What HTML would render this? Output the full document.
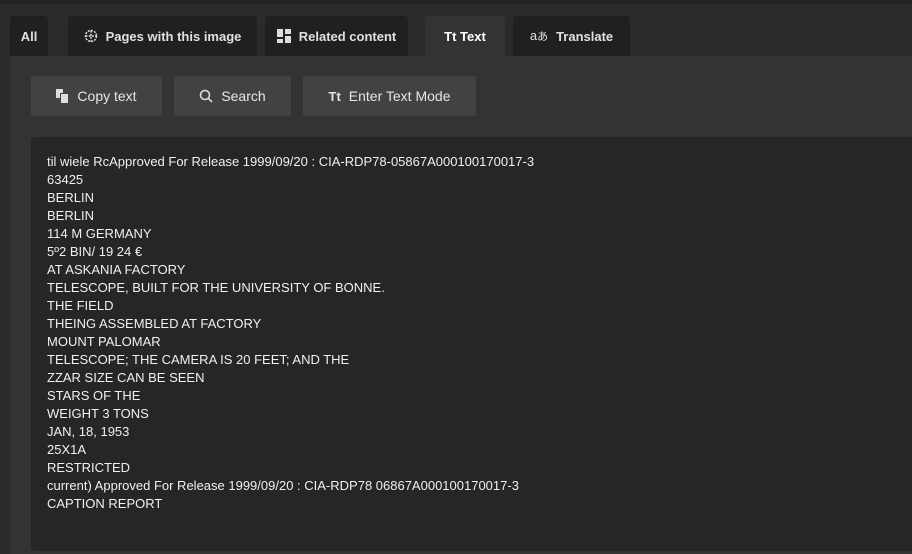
<!DOCTYPE html>
<html><head><meta charset="utf-8"><style>
*{margin:0;padding:0;box-sizing:border-box}
body{width:912px;height:554px;overflow:hidden;background:#2b2b2b;font-family:"Liberation Sans",Arial,sans-serif;position:relative;color:#e8e8e8}
.top{position:absolute;left:0;top:0;width:912px;height:4px;background:#232323}
.tab{position:absolute;top:16px;height:40px;background:#202020;border-radius:4px 4px 0 0;font-size:13px;font-weight:bold;color:#e0e0e0;display:flex;align-items:center;justify-content:center;gap:8px}
.tab.act{background:#333;color:#fff}
.panel{position:absolute;left:10px;top:56px;width:902px;height:498px;background:#333}
.btn{position:absolute;top:76px;height:40px;background:#424242;border-radius:2px;font-size:14px;color:#e6e6e6;display:flex;align-items:center;justify-content:center;gap:8px}
.ta{position:absolute;left:31px;top:137px;width:881px;height:414px;background:#262626;border-radius:4px 0 0 4px}
.txt{position:absolute;left:47px;top:153px;font-size:13px;line-height:18px;color:#f0f0f0;white-space:pre}
</style></head><body>
<div class="top"></div>
<div class="tab" style="left:10px;width:38px">All</div>
<div class="tab" style="left:68px;width:189px"><svg width="14" height="14" viewBox="0 0 14 14" fill="none" stroke="#ddd" stroke-width="1.5" stroke-dasharray="2 1.2"><circle cx="7" cy="7" r="5.5"/><path d="M1.5 7h11M7 1.5v11"/></svg>Pages with this image</div>
<div class="tab" style="left:265px;width:143px"><svg width="14" height="14" viewBox="0 0 14 14" fill="#ddd"><rect x="0" y="0" width="6" height="8"/><rect x="8" y="0" width="6" height="5"/><rect x="0" y="10" width="6" height="4"/><rect x="8" y="7" width="6" height="7"/></svg>Related content</div>
<div class="tab act" style="left:425px;width:80px">Tt&nbsp;Text</div>
<div class="tab" style="left:513px;width:117px"><span style="font-weight:normal;font-size:13px">a<span style="font-size:11px">あ</span></span>Translate</div>
<div class="panel"></div>
<div class="btn" style="left:31px;width:131px"><svg width="13" height="14" viewBox="0 0 13 14" fill="#ddd"><rect x="0" y="0" width="7" height="9"/><rect x="4" y="4" width="8" height="10" fill="#424242"/><rect x="5" y="5" width="7" height="9"/></svg>Copy text</div>
<div class="btn" style="left:174px;width:117px"><svg width="14" height="14" viewBox="0 0 14 14" fill="none" stroke="#ddd" stroke-width="1.6"><circle cx="6" cy="6" r="4.5"/><path d="M9.3 9.3L13 13"/></svg>Search</div>
<div class="btn" style="left:303px;width:173px"><span style="font-weight:bold;font-size:13px">Tt</span>Enter Text Mode</div>
<div class="ta"></div>
<div class="txt">til wiele RcApproved For Release 1999/09/20 : CIA-RDP78-05867A000100170017-3
63425
BERLIN
BERLIN
114 M GERMANY
5º2 BIN/ 19 24 €
AT ASKANIA FACTORY
TELESCOPE, BUILT FOR THE UNIVERSITY OF BONNE.
THE FIELD
THEING ASSEMBLED AT FACTORY
MOUNT PALOMAR
TELESCOPE; THE CAMERA IS 20 FEET; AND THE
ZZAR SIZE CAN BE SEEN
STARS OF THE
WEIGHT 3 TONS
JAN, 18, 1953
25X1A
RESTRICTED
current) Approved For Release 1999/09/20 : CIA-RDP78 06867A000100170017-3
CAPTION REPORT</div>
</body></html>
